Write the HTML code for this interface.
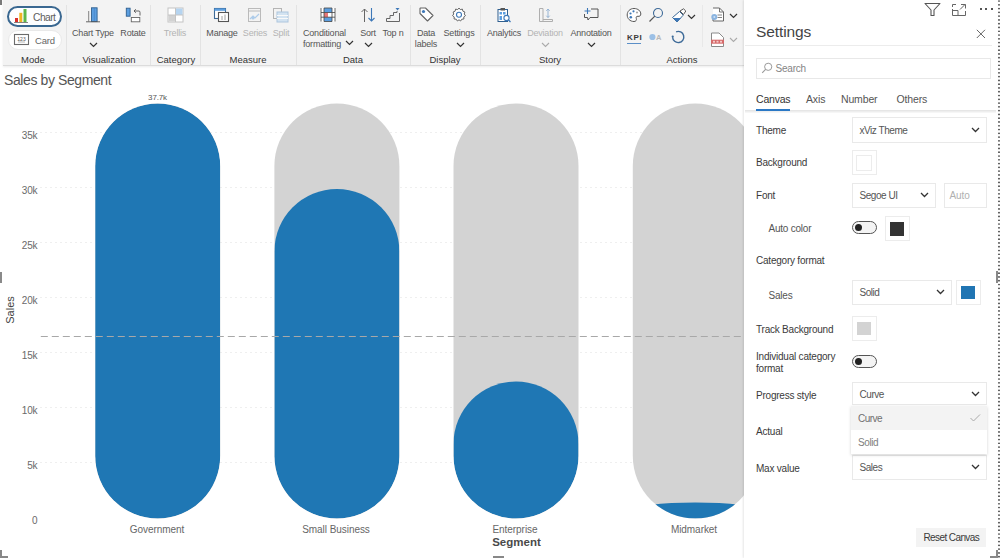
<!DOCTYPE html>
<html><head><meta charset="utf-8">
<style>
*{margin:0;padding:0;box-sizing:border-box}
html,body{width:1000px;height:558px;overflow:hidden;background:#fff;font-family:"Liberation Sans",sans-serif;position:relative}
.a{position:absolute;white-space:nowrap}
.rl{font-size:9px;color:#555;letter-spacing:-0.2px;text-align:center}
.rd{color:#b4b4b4}
.gl{font-size:9.5px;color:#333;letter-spacing:0px;text-align:center;line-height:11px}
.sep{position:absolute;top:5px;width:1px;height:60px;background:#e3e3e3}
.lbl{font-size:10px;color:#3a3a3a;letter-spacing:-0.22px}
.sel{position:absolute;border:1px solid #e9e9e9;background:#fff;font-size:10px;color:#555;letter-spacing:-0.45px}
.sel span{position:absolute;left:7px;top:50%;transform:translateY(-50%)}
.chev{position:absolute;right:6px;top:50%;margin-top:-3px}
.sw{position:absolute;border:1px solid #ececec;background:#fff}
.sw i{position:absolute;left:5px;top:5px;right:5px;bottom:5px}
.tg{position:absolute;width:25px;height:13px;border:1px solid #555;border-radius:7px;background:#f4f4f4}
.tg i{position:absolute;left:2px;top:2px;width:7px;height:7px;border-radius:50%;background:#222}
.yl{font-size:10px;color:#6a6a6a;text-align:right;width:30px;letter-spacing:-0.2px}
.xl{font-size:10px;color:#666;text-align:center;width:120px;letter-spacing:-0.05px}
</style></head><body>

<!-- corner marks -->
<div class="a" style="left:0;top:0;width:2px;height:5px;background:#7a7a7a"></div>
<div class="a" style="left:0;top:272px;width:2px;height:11px;background:#8a8a8a"></div>
<div class="a" style="left:0;top:550px;width:8px;height:8px;border-left:2px solid #888;border-bottom:2px solid #888"></div>
<div class="a" style="left:493px;top:556px;width:11px;height:2px;background:#888"></div>

<!-- RIBBON -->
<div class="a" style="left:3px;top:0;width:741px;height:66px;background:#f3f3f3;border-bottom:1px solid #dcdcdc;box-shadow:0 1px 2px rgba(0,0,0,0.08)"></div>


<!-- Mode -->
<div class="a" style="left:7px;top:5.5px;width:54.5px;height:21px;border:2px solid #3a6891;border-radius:11px;background:#fdfeff"></div>
<svg class="a" style="left:13px;top:8px" width="17" height="16" viewBox="0 0 17 16">
 <rect x="2" y="10" width="3" height="4.3" fill="#d9302c"/>
 <rect x="6.3" y="4.8" width="3" height="9.5" fill="#f0b323"/>
 <rect x="10.5" y="1" width="3" height="13.3" fill="#5cb84a"/>
 <rect x="1" y="14" width="14" height="0.9" fill="#777"/>
</svg>
<div class="a rl" style="left:33px;top:11.5px;font-size:10.3px;color:#606060;text-align:left;letter-spacing:-0.55px;line-height:11px">Chart</div>
<div class="a" style="left:7.5px;top:30px;width:54px;height:20px;border:1px solid #e9e9e9;border-radius:10px;background:#fff"></div>
<svg class="a" style="left:13px;top:33px" width="17" height="13" viewBox="0 0 17 13">
 <rect x="1.5" y="1.5" width="14" height="10" fill="none" stroke="#6b6b6b" stroke-width="1.1"/>
 <text x="8.5" y="7.6" font-size="5" font-family="Liberation Sans" text-anchor="middle" fill="#555">123</text>
 <line x1="5" y1="9" x2="12" y2="9" stroke="#888" stroke-width="0.6"/>
</svg>
<div class="a rl" style="left:35px;top:35px;font-size:9.5px;color:#666;text-align:left;letter-spacing:-0.2px">Card</div>
<div class="a gl" style="left:3px;top:53.8px;width:60px">Mode</div>
<div class="sep" style="left:66px"></div>

<!-- Visualization -->
<svg class="a" style="left:85px;top:6px" width="16" height="17" viewBox="0 0 16 17">
 <line x1="3.7" y1="5" x2="3.7" y2="15.5" stroke="#777" stroke-width="0.9"/>
 <rect x="6.5" y="1.8" width="5.6" height="13.8" fill="#5b9ee0" stroke="#2f5f8f" stroke-width="0.9"/>
 <line x1="9.3" y1="2" x2="9.3" y2="15.5" stroke="#3d78b8" stroke-width="0.5"/>
 <line x1="1" y1="15.8" x2="15" y2="15.8" stroke="#555" stroke-width="0.9"/>
</svg>
<div class="a rl" style="left:63px;top:28px;width:60px">Chart Type</div>
<svg class="a chv" style="left:89px;top:42px" width="9" height="6" viewBox="0 0 9 6"><path d="M1 1 L4.5 4.5 L8 1" fill="none" stroke="#333" stroke-width="1.2"/></svg>
<svg class="a" style="left:125px;top:7px" width="16" height="16" viewBox="0 0 16 16">
 <rect x="1.3" y="1.2" width="3.8" height="8" fill="#5b9ee0" stroke="#2f5f8f" stroke-width="0.9"/>
 <path d="M9 4 L14 4 Q15 4 15 5.5 L15 8.5 M9 4 L10.8 2.2 M9 4 L10.8 5.8" fill="none" stroke="#555" stroke-width="0.9"/>
 <rect x="6.3" y="10.5" width="8.5" height="4.3" fill="#fff" stroke="#666" stroke-width="0.9"/>
</svg>
<div class="a rl" style="left:113px;top:28px;width:40px">Rotate</div>
<div class="a gl" style="left:74px;top:53.8px;width:70px">Visualization</div>
<div class="sep" style="left:150px"></div>

<!-- Category -->
<svg class="a" style="left:167px;top:7px" width="17" height="16" viewBox="0 0 17 16">
 <rect x="1" y="1" width="15" height="14" fill="#fff" stroke="#c4c4c4" stroke-width="1"/>
 <rect x="8.5" y="1.5" width="7" height="6.5" fill="#b5d4f0"/>
 <rect x="1.5" y="8" width="7" height="6.5" fill="#d2d2d2"/>
 <line x1="8.5" y1="1" x2="8.5" y2="15" stroke="#c4c4c4"/>
 <line x1="1" y1="8" x2="16" y2="8" stroke="#c4c4c4"/>
</svg>
<div class="a rl rd" style="left:155px;top:28px;width:40px">Trellis</div>
<div class="a gl" style="left:151px;top:53.8px;width:50px">Category</div>
<div class="sep" style="left:200px"></div>

<!-- Measure -->
<svg class="a" style="left:213px;top:7px" width="17" height="16" viewBox="0 0 17 16">
 <rect x="1.5" y="1.5" width="11" height="10" fill="#fff" stroke="#3d6a98" stroke-width="1.1"/>
 <rect x="1.5" y="1.5" width="11" height="2.3" fill="#5b9ee0"/>
 <rect x="5.5" y="5.5" width="10" height="9" fill="#fff" stroke="#555" stroke-width="1.1"/>
 <line x1="9" y1="9" x2="9" y2="13" stroke="#888" stroke-width="0.8"/>
 <line x1="12" y1="7.5" x2="12" y2="13" stroke="#888" stroke-width="0.8"/>
</svg>
<div class="a rl" style="left:202px;top:28px;width:40px">Manage</div>
<svg class="a" style="left:247px;top:7px" width="16" height="16" viewBox="0 0 16 16" opacity="0.45">
 <rect x="1.5" y="1.5" width="12" height="13" fill="none" stroke="#777" stroke-width="1"/>
 <line x1="1.5" y1="4" x2="13.5" y2="4" stroke="#777"/>
 <path d="M3 12 L6 9 L8 11 L12 7" fill="none" stroke="#5b9ee0" stroke-width="1.2"/>
 <circle cx="6" cy="11" r="1.5" fill="#5b9ee0"/>
</svg>
<div class="a rl rd" style="left:235px;top:28px;width:40px">Series</div>
<svg class="a" style="left:272px;top:7px" width="17" height="16" viewBox="0 0 17 16" opacity="0.5">
 <rect x="1.5" y="1.5" width="8" height="10" fill="none" stroke="#777" stroke-width="1"/>
 <rect x="5" y="5" width="11" height="10" fill="#b5d4f0" stroke="#6a9ccc" stroke-width="1"/>
 <line x1="5" y1="8.5" x2="16" y2="8.5" stroke="#fff"/>
 <line x1="5" y1="11.5" x2="16" y2="11.5" stroke="#fff"/>
</svg>
<div class="a rl rd" style="left:261px;top:28px;width:40px">Split</div>
<div class="a gl" style="left:218px;top:53.8px;width:60px">Measure</div>
<div class="sep" style="left:296px"></div>

<!-- Data -->
<svg class="a" style="left:319px;top:6px" width="17" height="17" viewBox="0 0 17 17">
 <rect x="2" y="2" width="14" height="13.5" fill="#fff"/>
 <rect x="5" y="2" width="8" height="4.5" fill="#5b9ee0"/>
 <rect x="5" y="11.2" width="8" height="4.3" fill="#5b9ee0"/>
 <rect x="5" y="6.5" width="4" height="4.7" fill="#e87878"/>
 <path d="M2 2 L2 15.5 M16 2 L16 15.5 M5 2 L5 15.5 M13 2 L13 15.5 M2 6.5 L16 6.5 M2 11.2 L16 11.2 M5 2 L13 2 M5 15.5 L13 15.5" stroke="#444" stroke-width="0.8"/>
</svg>
<div class="a rl" style="left:303px;top:28px;text-align:left">Conditional</div>
<div class="a rl" style="left:303px;top:39px;text-align:left">formatting</div>
<svg class="a" style="left:345px;top:40px" width="9" height="6" viewBox="0 0 9 6"><path d="M1 1 L4.5 4.5 L8 1" fill="none" stroke="#333" stroke-width="1.2"/></svg>
<svg class="a" style="left:360px;top:7px" width="16" height="16" viewBox="0 0 16 16">
 <path d="M4.5 15 L4.5 2 M1.5 5 L4.5 2 L7.5 5" fill="none" stroke="#666" stroke-width="1"/>
 <path d="M11.5 1 L11.5 14 M8.5 11 L11.5 14 L14.5 11" fill="none" stroke="#3d78b8" stroke-width="1.1"/>
</svg>
<div class="a rl" style="left:348px;top:28px;width:40px">Sort</div>
<svg class="a" style="left:364px;top:42px" width="9" height="6" viewBox="0 0 9 6"><path d="M1 1 L4.5 4.5 L8 1" fill="none" stroke="#333" stroke-width="1.2"/></svg>
<svg class="a" style="left:385px;top:7px" width="16" height="16" viewBox="0 0 16 16">
 <path d="M1.5 14.5 L1.5 11.5 L5 11.5 L5 8.5 L8.5 8.5 L8.5 5.5 L12 5.5 L12 4 M1.5 14.5 L14.5 14.5 L14.5 6" fill="none" stroke="#666" stroke-width="1"/>
 <path d="M10.5 1 L14.5 1 L12.5 3.5 Z" fill="#3d78b8"/>
</svg>
<div class="a rl" style="left:373px;top:28px;width:40px">Top n</div>
<div class="a gl" style="left:328px;top:53.8px;width:50px">Data</div>
<div class="sep" style="left:410px"></div>

<!-- Display -->
<svg class="a" style="left:418px;top:6px" width="17" height="17" viewBox="0 0 17 17">
 <path d="M2 2.5 L2 7.5 L9.5 15 L15 9.5 L7.5 2 L2.5 2 Z" fill="#fff" stroke="#666" stroke-width="1.1" stroke-linejoin="round"/>
 <circle cx="5.5" cy="5.5" r="1.6" fill="#3d78b8"/>
</svg>
<div class="a rl" style="left:406px;top:28px;width:40px">Data</div>
<div class="a rl" style="left:406px;top:39px;width:40px">labels</div>
<svg class="a" style="left:451px;top:7px" width="16" height="16" viewBox="0 0 16 16">
 <path d="M8 1 L9.3 2.6 L11.4 2.1 L11.9 4.2 L13.9 5 L13.2 7 L14.5 8.6 L12.8 9.9 L12.9 12 L10.8 12.2 L9.6 14 L8 12.8 L6.4 14 L5.2 12.2 L3.1 12 L3.2 9.9 L1.5 8.6 L2.8 7 L2.1 5 L4.1 4.2 L4.6 2.1 L6.7 2.6 Z" fill="#fff" stroke="#666" stroke-width="1" stroke-linejoin="round"/>
 <circle cx="8" cy="7.8" r="2.5" fill="none" stroke="#3d78b8" stroke-width="1.1"/>
</svg>
<div class="a rl" style="left:439px;top:28px;width:40px">Settings</div>
<svg class="a" style="left:456px;top:42px" width="9" height="6" viewBox="0 0 9 6"><path d="M1 1 L4.5 4.5 L8 1" fill="none" stroke="#333" stroke-width="1.2"/></svg>
<div class="a gl" style="left:420px;top:53.8px;width:50px">Display</div>
<div class="sep" style="left:480px"></div>

<!-- Story -->
<svg class="a" style="left:496px;top:7px" width="16" height="16" viewBox="0 0 16 16">
 <rect x="2" y="2.5" width="9.5" height="12" fill="#fff" stroke="#2f5f8f" stroke-width="1"/>
 <rect x="4.5" y="1" width="4.5" height="2.5" fill="#555"/>
 <rect x="3.5" y="5" width="2.5" height="2.5" fill="#5b9ee0"/>
 <rect x="7" y="5" width="2.5" height="2.5" fill="#5b9ee0"/>
 <rect x="3.5" y="9" width="2.5" height="4" fill="#5b9ee0"/>
 <circle cx="10.5" cy="11" r="2.6" fill="#fff" stroke="#3d78b8" stroke-width="1.1"/>
 <line x1="12.3" y1="12.8" x2="14.5" y2="15" stroke="#3d78b8" stroke-width="1.3"/>
</svg>
<div class="a rl" style="left:484px;top:28px;width:40px">Analytics</div>
<svg class="a" style="left:538px;top:7px" width="16" height="16" viewBox="0 0 16 16" opacity="0.55">
 <path d="M1.5 1.5 L5 1.5 L5 14.5 L1.5 14.5 Z" fill="none" stroke="#777" stroke-width="1"/>
 <path d="M5 14.5 L14.5 14.5 L14.5 12.5 L5 12.5" fill="none" stroke="#777" stroke-width="1"/>
 <path d="M10 2 L10 10.5 M8.3 3.8 L10 2 L11.7 3.8 M8.3 8.7 L10 10.5 L11.7 8.7" fill="none" stroke="#3d78b8" stroke-width="0.9"/>
</svg>
<div class="a rl rd" style="left:525px;top:28px;width:40px">Deviation</div>
<svg class="a" style="left:541px;top:42px" width="9" height="6" viewBox="0 0 9 6"><path d="M1 1 L4.5 4.5 L8 1" fill="none" stroke="#aaa" stroke-width="1.1"/></svg>
<svg class="a" style="left:583px;top:7px" width="16" height="16" viewBox="0 0 16 16">
 <path d="M8 2 L15 2 L15 10.5 L7 10.5 L5 13 L4.5 10.5 L1.5 10.5 L1.5 7" fill="none" stroke="#555" stroke-width="1"/>
 <path d="M4.5 1 L4.5 7 M1.5 4 L7.5 4" fill="none" stroke="#3d78b8" stroke-width="1.1"/>
</svg>
<div class="a rl" style="left:570px;top:28px;width:42px">Annotation</div>
<svg class="a" style="left:587px;top:42px" width="9" height="6" viewBox="0 0 9 6"><path d="M1 1 L4.5 4.5 L8 1" fill="none" stroke="#333" stroke-width="1.2"/></svg>
<div class="a gl" style="left:525px;top:53.8px;width:50px">Story</div>
<div class="sep" style="left:620px"></div>

<!-- Actions -->
<svg class="a" style="left:626px;top:7px" width="16" height="16" viewBox="0 0 16 16">
 <path d="M8 1.5 C12 1.5 14.8 4 14.8 7 C14.8 9 13.5 9.5 12 9.3 C10.5 9.1 9.8 10 10.3 11.5 C10.8 13 10 14.5 8 14.5 C4 14.5 1.2 11.5 1.2 8 C1.2 4.3 4 1.5 8 1.5 Z" fill="#fff" stroke="#555" stroke-width="1"/>
 <circle cx="4.5" cy="6.5" r="1.1" fill="#3d78b8"/>
 <circle cx="7.5" cy="4.3" r="1.1" fill="#3d78b8"/>
 <circle cx="11" cy="5.5" r="1.1" fill="#aaa"/>
 <circle cx="4.8" cy="10.3" r="1.3" fill="#3d78b8"/>
</svg>
<svg class="a" style="left:648px;top:7px" width="16" height="16" viewBox="0 0 16 16">
 <circle cx="10" cy="6" r="4.5" fill="none" stroke="#3d6a98" stroke-width="1.1"/>
 <line x1="6.8" y1="9.2" x2="1.5" y2="14.5" stroke="#555" stroke-width="1.2"/>
</svg>
<svg class="a" style="left:671px;top:8px" width="16" height="16" viewBox="0 0 16 16">
 <path d="M9 3 L12.5 0.8 L14.8 3 L12.5 6.5 Z" fill="#fff" stroke="#555" stroke-width="1"/>
 <path d="M8.5 3.5 L12.2 7.2 L6 14 L1.5 9.5 Z" fill="#fff" stroke="#3d6a98" stroke-width="1"/>
 <path d="M2 10 L10 10 L6 14 Z" fill="#3d78b8"/>
</svg>
<svg class="a" style="left:687px;top:13.5px" width="9" height="6" viewBox="0 0 9 6"><path d="M1 1 L4.5 4.5 L8 1" fill="none" stroke="#333" stroke-width="1.2"/></svg>
<div class="a" style="left:627px;top:32.6px;font-size:8px;font-weight:bold;color:#3a3a3a;letter-spacing:0.7px;line-height:9px">KPI</div>
<div class="a" style="left:627px;top:43px;width:14px;height:1.3px;background:#5b8fc7"></div>
<svg class="a" style="left:649px;top:32px" width="16" height="10" viewBox="0 0 16 10">
 <circle cx="3.4" cy="5" r="3.1" fill="#9cc0e6"/>
 <text x="9.8" y="8" font-size="7.5" font-weight="bold" font-family="Liberation Sans" text-anchor="middle" fill="#b8b8b8">A</text>
</svg>
<svg class="a" style="left:671px;top:30px" width="15" height="15" viewBox="0 0 15 15">
 <path d="M5.1 1.8 A5.6 5.6 0 1 1 1.6 7.2" fill="none" stroke="#3d6a98" stroke-width="1.4"/>
 <circle cx="1.7" cy="6.6" r="1.1" fill="#3d6a98"/>
</svg>
<div class="a gl" style="left:657px;top:53.8px;width:50px">Actions</div>
<div class="a" style="left:702px;top:5px;width:1px;height:42px;background:#e8e8e8"></div>
<svg class="a" style="left:709px;top:6px" width="17" height="17" viewBox="0 0 17 17">
 <path d="M4 2 L10.5 2 L14.5 6 L14.5 15 L4 15 L4 12" fill="#fff" stroke="#666" stroke-width="1"/>
 <path d="M10.5 2 L10.5 6 L14.5 6" fill="none" stroke="#666" stroke-width="0.9"/>
 <line x1="8.5" y1="9" x2="13" y2="9" stroke="#777" stroke-width="0.9"/>
 <line x1="8.5" y1="11.5" x2="13" y2="11.5" stroke="#777" stroke-width="0.9"/>
 <circle cx="5.3" cy="11" r="3" fill="#8ab4e0"/>
 <circle cx="5.3" cy="11" r="1" fill="#cfe0f2"/>
</svg>
<svg class="a" style="left:728.5px;top:12.5px" width="9" height="6" viewBox="0 0 9 6"><path d="M1 1 L4.5 4.5 L8 1" fill="none" stroke="#333" stroke-width="1.2"/></svg>
<svg class="a" style="left:709px;top:31px" width="17" height="17" viewBox="0 0 17 17">
 <path d="M2.5 2 L10 2 L14.5 6.5 L14.5 15.5 L2.5 15.5 Z" fill="#fff" stroke="#8a8a8a" stroke-width="1"/>
 <rect x="2" y="8.7" width="13" height="4" fill="#d66b6b"/>
 <rect x="4" y="9.8" width="2" height="1.8" fill="#f4caca"/>
 <rect x="7.5" y="9.8" width="2" height="1.8" fill="#f4caca"/>
 <rect x="11" y="9.8" width="2" height="1.8" fill="#f4caca"/>
</svg>
<svg class="a" style="left:729px;top:36.5px" width="9" height="6" viewBox="0 0 9 6"><path d="M1 1 L4.5 4.5 L8 1" fill="none" stroke="#aaa" stroke-width="1.1"/></svg>


<!-- CHART -->
<div class="a" style="left:4px;top:72.2px;font-size:14px;color:#555;letter-spacing:-0.4px">Sales by Segment</div>

<svg class="a" style="left:0;top:0" width="1000" height="558">
<g stroke="#efefef" stroke-width="1" stroke-dasharray="2,3">
<line x1="40" y1="132.5" x2="744" y2="132.5"/>
<line x1="40" y1="187.5" x2="744" y2="187.5"/>
<line x1="40" y1="242.5" x2="744" y2="242.5"/>
<line x1="40" y1="297.5" x2="744" y2="297.5"/>
<line x1="40" y1="352.5" x2="744" y2="352.5"/>
<line x1="40" y1="407.5" x2="744" y2="407.5"/>
<line x1="40" y1="462.5" x2="744" y2="462.5"/>
</g><defs>
<clipPath id="c0"><rect x="95.2" y="103.5" width="125" height="415.0" rx="62.5" ry="62.5"/></clipPath>
<clipPath id="c1"><rect x="274.4" y="103.5" width="125" height="415.0" rx="62.5" ry="62.5"/></clipPath>
<clipPath id="c2"><rect x="453.5" y="103.5" width="125" height="415.0" rx="62.5" ry="62.5"/></clipPath>
<clipPath id="c3"><rect x="632.8" y="103.5" width="125" height="415.0" rx="62.5" ry="62.5"/></clipPath>
</defs>
<rect x="95.2" y="103.5" width="125" height="415.0" rx="62.5" fill="#d3d3d3"/>
<rect x="274.4" y="103.5" width="125" height="415.0" rx="62.5" fill="#d3d3d3"/>
<rect x="453.5" y="103.5" width="125" height="415.0" rx="62.5" fill="#d3d3d3"/>
<rect x="632.8" y="103.5" width="125" height="415.0" rx="62.5" fill="#d3d3d3"/>
<rect x="95.2" y="103.5" width="125" height="415.0" rx="62.5" ry="62.5" fill="#1f77b4" clip-path="url(#c0)"/>
<rect x="274.4" y="188.9" width="125" height="329.6" rx="62.5" ry="62.5" fill="#1f77b4" clip-path="url(#c1)"/>
<rect x="453.5" y="381.5" width="125" height="137.0" rx="62.5" ry="62.5" fill="#1f77b4" clip-path="url(#c2)"/>
<rect x="632.8" y="502.5" width="125" height="16.0" rx="62.5" ry="8.0" fill="#1f77b4" clip-path="url(#c3)"/>
<line x1="40.8" y1="336.5" x2="744" y2="336.5" stroke="#a8a8a8" stroke-width="1" stroke-dasharray="7,4"/>
</svg>

<div class="a" style="left:139.5px;top:93px;font-size:8px;color:#555;width:36px;text-align:center;letter-spacing:-0.15px">37.7k</div>

<div class="a yl" style="left:7.3px;top:129.5px">35k</div>
<div class="a yl" style="left:7.3px;top:184.5px">30k</div>
<div class="a yl" style="left:7.3px;top:239.5px">25k</div>
<div class="a yl" style="left:7.3px;top:294.5px">20k</div>
<div class="a yl" style="left:7.3px;top:349.5px">15k</div>
<div class="a yl" style="left:7.3px;top:404.5px">10k</div>
<div class="a yl" style="left:7.3px;top:459.5px">5k</div>
<div class="a yl" style="left:7.3px;top:514.5px">0</div>
<div class="a" style="left:-6px;top:304px;font-size:11px;color:#444;transform:rotate(-90deg);width:32px;text-align:center">Sales</div>

<div class="a xl" style="left:97px;top:523.5px">Government</div>
<div class="a xl" style="left:276px;top:523.5px">Small Business</div>
<div class="a xl" style="left:455px;top:523.5px">Enterprise</div>
<div class="a xl" style="left:634px;top:523.5px">Midmarket</div>
<div class="a" style="left:456.5px;top:535.5px;width:120px;text-align:center;font-size:11.5px;color:#4a4a4a;font-weight:bold;letter-spacing:0px">Segment</div>

<!-- SETTINGS PANEL -->
<div class="a" style="left:744px;top:0;width:253px;height:558px;background:#fff;box-shadow:-1px 0 2px rgba(0,0,0,0.10)"></div>

<!-- header icons -->
<svg class="a" style="left:924px;top:2px" width="17" height="15" viewBox="0 0 17 15">
 <path d="M1 1.5 L16 1.5 L10 8 L10 13.5 L7 13.5 L7 8 Z" fill="none" stroke="#555" stroke-width="1.1" stroke-linejoin="round"/>
</svg>
<svg class="a" style="left:951px;top:3px" width="16" height="14" viewBox="0 0 16 14">
 <path d="M1.5 6 L1.5 12.5 L14.5 12.5 L14.5 8 M1.5 4 L1.5 1.5 L5 1.5 M1.5 7.5 L7 7.5 L7 12.5" fill="none" stroke="#666" stroke-width="1"/>
 <path d="M9 6.5 L14 1.5 M10 1.5 L14.5 1.5 L14.5 5.5" fill="none" stroke="#666" stroke-width="1"/>
</svg>
<div class="a" style="left:979.5px;top:8px;width:2px;height:2px;background:#555"></div>
<div class="a" style="left:985px;top:8px;width:2px;height:2px;background:#555"></div>
<div class="a" style="left:990.5px;top:8px;width:2px;height:2px;background:#555"></div>

<div class="a" style="left:756px;top:22.8px;font-size:15.5px;color:#444;letter-spacing:-0.1px;line-height:18px">Settings</div>
<svg class="a" style="left:975.5px;top:29px" width="10" height="10" viewBox="0 0 10 10"><path d="M0.8 0.8 L9 9 M9 0.8 L0.8 9" stroke="#666" stroke-width="1"/></svg>
<div class="a" style="left:745px;top:45px;width:247px;height:1px;background:#ececec"></div>

<div class="a" style="left:756px;top:57.5px;width:234.5px;height:21px;border:1px solid #e8e8e8;background:#fff"></div>
<svg class="a" style="left:761px;top:62px" width="12" height="12" viewBox="0 0 12 12">
 <circle cx="7.2" cy="4.8" r="3.6" fill="none" stroke="#9a9a9a" stroke-width="1"/>
 <line x1="4.6" y1="7.4" x2="1.2" y2="10.8" stroke="#9a9a9a" stroke-width="1.1"/>
</svg>
<div class="a" style="left:775.5px;top:63px;font-size:10px;color:#858585;letter-spacing:-0.2px;line-height:11px">Search</div>

<div class="a" style="left:756px;top:92.5px;font-size:10.5px;color:#333;letter-spacing:-0.2px;line-height:12px">Canvas</div>
<div class="a" style="left:806px;top:92.5px;font-size:10.5px;color:#555;letter-spacing:-0.15px;line-height:12px">Axis</div>
<div class="a" style="left:841px;top:92.5px;font-size:10.5px;color:#555;letter-spacing:-0.15px;line-height:12px">Number</div>
<div class="a" style="left:896.5px;top:92.5px;font-size:10.5px;color:#555;letter-spacing:-0.15px;line-height:12px">Others</div>
<div class="a" style="left:745px;top:110px;width:251px;height:3px;background:linear-gradient(#e2e2e2,#fafafa)"></div>
<div class="a" style="left:756px;top:108.5px;width:34px;height:2px;background:#2b78c5"></div>

<!-- rows -->
<div class="a lbl" style="left:756px;top:124.5px;line-height:11px">Theme</div>
<div class="sel" style="left:851.5px;top:117px;width:135px;height:25.5px"><span>xViz Theme</span><svg class="chev" width="9" height="6" viewBox="0 0 9 6"><path d="M1 1 L4.5 4.5 L8 1" fill="none" stroke="#333" stroke-width="1.3"/></svg></div>

<div class="a lbl" style="left:756px;top:157px;line-height:11px">Background</div>
<div class="sw" style="left:851.5px;top:150px;width:25px;height:25px"><i style="border:1px solid #ececec;background:#fff;left:3.5px;top:3.5px;right:3.5px;bottom:3.5px"></i></div>

<div class="a lbl" style="left:756px;top:190px;line-height:11px">Font</div>
<div class="sel" style="left:851.5px;top:183px;width:84px;height:24.5px"><span>Segoe UI</span><svg class="chev" width="9" height="6" viewBox="0 0 9 6"><path d="M1 1 L4.5 4.5 L8 1" fill="none" stroke="#333" stroke-width="1.3"/></svg></div>
<div class="sel" style="left:944px;top:183px;width:42.5px;height:24.5px;color:#b0b0b0"><span style="left:4.5px;letter-spacing:-0.1px">Auto</span></div>

<div class="a lbl" style="left:768.5px;top:223px;line-height:11px;color:#555">Auto color</div>
<div class="tg" style="left:852px;top:221px"><i></i></div>
<div class="sw" style="left:884.5px;top:216px;width:25px;height:25px"><i style="background:#333;left:4.5px;top:4.5px;right:4.5px;bottom:4.5px"></i></div>

<div class="a lbl" style="left:756px;top:255px;line-height:11px">Category format</div>

<div class="a lbl" style="left:768.5px;top:289.5px;line-height:11px;color:#555">Sales</div>
<div class="sel" style="left:851.5px;top:280px;width:100px;height:24.5px"><span>Solid</span><svg class="chev" width="9" height="6" viewBox="0 0 9 6"><path d="M1 1 L4.5 4.5 L8 1" fill="none" stroke="#333" stroke-width="1.3"/></svg></div>
<div class="sw" style="left:955.5px;top:280px;width:25px;height:24.5px"><i style="background:#2075b3;left:4.5px;top:4.5px;right:4.5px;bottom:4.5px"></i></div>

<div class="a lbl" style="left:756px;top:324px;line-height:11px">Track Background</div>
<div class="sw" style="left:851.5px;top:316px;width:25px;height:24.5px"><i style="background:#d3d3d3;left:4.5px;top:4.5px;right:4.5px;bottom:4.5px"></i></div>

<div class="a lbl" style="left:756px;top:350.5px;line-height:12.5px">Individual category<br>format</div>
<div class="tg" style="left:852px;top:355px"><i></i></div>

<div class="a lbl" style="left:756px;top:389.5px;line-height:11px">Progress style</div>
<div class="sel" style="left:851.5px;top:382px;width:135px;height:23px"><span>Curve</span><svg class="chev" width="9" height="6" viewBox="0 0 9 6"><path d="M1 1 L4.5 4.5 L8 1" fill="none" stroke="#333" stroke-width="1.3"/></svg></div>

<div class="a lbl" style="left:756px;top:425.5px;line-height:11px">Actual</div>

<div class="a lbl" style="left:756px;top:463px;line-height:11px">Max value</div>
<div class="sel" style="left:851.5px;top:455px;width:135px;height:24.5px"><span>Sales</span><svg class="chev" width="9" height="6" viewBox="0 0 9 6"><path d="M1 1 L4.5 4.5 L8 1" fill="none" stroke="#333" stroke-width="1.3"/></svg></div>

<!-- dropdown -->
<div class="a" style="left:851px;top:406px;width:135.5px;height:47.5px;background:#fff;box-shadow:0 1px 3px rgba(0,0,0,0.18)"></div>
<div class="a" style="left:851px;top:406px;width:135.5px;height:23.5px;background:#f3f3f3"></div>
<div class="a" style="left:858px;top:412.5px;font-size:10px;color:#707070;letter-spacing:-0.5px;line-height:11px">Curve</div>
<svg class="a" style="left:969px;top:413px" width="12" height="10" viewBox="0 0 12 10"><path d="M1.5 5 L4.5 8 L11 1.5" fill="none" stroke="#aaa" stroke-width="1"/></svg>
<div class="a" style="left:858px;top:436.5px;font-size:10px;color:#808080;letter-spacing:-0.4px;line-height:11px">Solid</div>

<!-- reset -->
<div class="a" style="left:916px;top:527.5px;width:70px;height:19px;background:#f3f3f3"></div>
<div class="a" style="left:923.5px;top:532px;font-size:10px;color:#3a3a3a;letter-spacing:-0.6px;line-height:11px">Reset Canvas</div>

<!-- dotted border & handles -->
<svg class="a" style="left:997.5px;top:0" width="2" height="558" fill="#333"><circle cx="1" cy="1.00" r="0.85"/><circle cx="1" cy="4.78" r="0.85"/><circle cx="1" cy="8.56" r="0.85"/><circle cx="1" cy="12.34" r="0.85"/><circle cx="1" cy="16.12" r="0.85"/><circle cx="1" cy="19.90" r="0.85"/><circle cx="1" cy="23.68" r="0.85"/><circle cx="1" cy="27.46" r="0.85"/><circle cx="1" cy="31.24" r="0.85"/><circle cx="1" cy="35.02" r="0.85"/><circle cx="1" cy="38.80" r="0.85"/><circle cx="1" cy="42.58" r="0.85"/><circle cx="1" cy="46.36" r="0.85"/><circle cx="1" cy="50.14" r="0.85"/><circle cx="1" cy="53.92" r="0.85"/><circle cx="1" cy="57.70" r="0.85"/><circle cx="1" cy="61.48" r="0.85"/><circle cx="1" cy="65.26" r="0.85"/><circle cx="1" cy="69.04" r="0.85"/><circle cx="1" cy="72.82" r="0.85"/><circle cx="1" cy="76.60" r="0.85"/><circle cx="1" cy="80.38" r="0.85"/><circle cx="1" cy="84.16" r="0.85"/><circle cx="1" cy="87.94" r="0.85"/><circle cx="1" cy="91.72" r="0.85"/><circle cx="1" cy="95.50" r="0.85"/><circle cx="1" cy="99.28" r="0.85"/><circle cx="1" cy="103.06" r="0.85"/><circle cx="1" cy="106.84" r="0.85"/><circle cx="1" cy="110.62" r="0.85"/><circle cx="1" cy="114.40" r="0.85"/><circle cx="1" cy="118.18" r="0.85"/><circle cx="1" cy="121.96" r="0.85"/><circle cx="1" cy="125.74" r="0.85"/><circle cx="1" cy="129.52" r="0.85"/><circle cx="1" cy="133.30" r="0.85"/><circle cx="1" cy="137.08" r="0.85"/><circle cx="1" cy="140.86" r="0.85"/><circle cx="1" cy="144.64" r="0.85"/><circle cx="1" cy="148.42" r="0.85"/><circle cx="1" cy="152.20" r="0.85"/><circle cx="1" cy="155.98" r="0.85"/><circle cx="1" cy="159.76" r="0.85"/><circle cx="1" cy="163.54" r="0.85"/><circle cx="1" cy="167.32" r="0.85"/><circle cx="1" cy="171.10" r="0.85"/><circle cx="1" cy="174.88" r="0.85"/><circle cx="1" cy="178.66" r="0.85"/><circle cx="1" cy="182.44" r="0.85"/><circle cx="1" cy="186.22" r="0.85"/><circle cx="1" cy="190.00" r="0.85"/><circle cx="1" cy="193.78" r="0.85"/><circle cx="1" cy="197.56" r="0.85"/><circle cx="1" cy="201.34" r="0.85"/><circle cx="1" cy="205.12" r="0.85"/><circle cx="1" cy="208.90" r="0.85"/><circle cx="1" cy="212.68" r="0.85"/><circle cx="1" cy="216.46" r="0.85"/><circle cx="1" cy="220.24" r="0.85"/><circle cx="1" cy="224.02" r="0.85"/><circle cx="1" cy="227.80" r="0.85"/><circle cx="1" cy="231.58" r="0.85"/><circle cx="1" cy="235.36" r="0.85"/><circle cx="1" cy="239.14" r="0.85"/><circle cx="1" cy="242.92" r="0.85"/><circle cx="1" cy="246.70" r="0.85"/><circle cx="1" cy="250.48" r="0.85"/><circle cx="1" cy="254.26" r="0.85"/><circle cx="1" cy="258.04" r="0.85"/><circle cx="1" cy="261.82" r="0.85"/><circle cx="1" cy="265.60" r="0.85"/><circle cx="1" cy="269.38" r="0.85"/><circle cx="1" cy="273.16" r="0.85"/><circle cx="1" cy="276.94" r="0.85"/><circle cx="1" cy="280.72" r="0.85"/><circle cx="1" cy="284.50" r="0.85"/><circle cx="1" cy="288.28" r="0.85"/><circle cx="1" cy="292.06" r="0.85"/><circle cx="1" cy="295.84" r="0.85"/><circle cx="1" cy="299.62" r="0.85"/><circle cx="1" cy="303.40" r="0.85"/><circle cx="1" cy="307.18" r="0.85"/><circle cx="1" cy="310.96" r="0.85"/><circle cx="1" cy="314.74" r="0.85"/><circle cx="1" cy="318.52" r="0.85"/><circle cx="1" cy="322.30" r="0.85"/><circle cx="1" cy="326.08" r="0.85"/><circle cx="1" cy="329.86" r="0.85"/><circle cx="1" cy="333.64" r="0.85"/><circle cx="1" cy="337.42" r="0.85"/><circle cx="1" cy="341.20" r="0.85"/><circle cx="1" cy="344.98" r="0.85"/><circle cx="1" cy="348.76" r="0.85"/><circle cx="1" cy="352.54" r="0.85"/><circle cx="1" cy="356.32" r="0.85"/><circle cx="1" cy="360.10" r="0.85"/><circle cx="1" cy="363.88" r="0.85"/><circle cx="1" cy="367.66" r="0.85"/><circle cx="1" cy="371.44" r="0.85"/><circle cx="1" cy="375.22" r="0.85"/><circle cx="1" cy="379.00" r="0.85"/><circle cx="1" cy="382.78" r="0.85"/><circle cx="1" cy="386.56" r="0.85"/><circle cx="1" cy="390.34" r="0.85"/><circle cx="1" cy="394.12" r="0.85"/><circle cx="1" cy="397.90" r="0.85"/><circle cx="1" cy="401.68" r="0.85"/><circle cx="1" cy="405.46" r="0.85"/><circle cx="1" cy="409.24" r="0.85"/><circle cx="1" cy="413.02" r="0.85"/><circle cx="1" cy="416.80" r="0.85"/><circle cx="1" cy="420.58" r="0.85"/><circle cx="1" cy="424.36" r="0.85"/><circle cx="1" cy="428.14" r="0.85"/><circle cx="1" cy="431.92" r="0.85"/><circle cx="1" cy="435.70" r="0.85"/><circle cx="1" cy="439.48" r="0.85"/><circle cx="1" cy="443.26" r="0.85"/><circle cx="1" cy="447.04" r="0.85"/><circle cx="1" cy="450.82" r="0.85"/><circle cx="1" cy="454.60" r="0.85"/><circle cx="1" cy="458.38" r="0.85"/><circle cx="1" cy="462.16" r="0.85"/><circle cx="1" cy="465.94" r="0.85"/><circle cx="1" cy="469.72" r="0.85"/><circle cx="1" cy="473.50" r="0.85"/><circle cx="1" cy="477.28" r="0.85"/><circle cx="1" cy="481.06" r="0.85"/><circle cx="1" cy="484.84" r="0.85"/><circle cx="1" cy="488.62" r="0.85"/><circle cx="1" cy="492.40" r="0.85"/><circle cx="1" cy="496.18" r="0.85"/><circle cx="1" cy="499.96" r="0.85"/><circle cx="1" cy="503.74" r="0.85"/><circle cx="1" cy="507.52" r="0.85"/><circle cx="1" cy="511.30" r="0.85"/><circle cx="1" cy="515.08" r="0.85"/><circle cx="1" cy="518.86" r="0.85"/><circle cx="1" cy="522.64" r="0.85"/><circle cx="1" cy="526.42" r="0.85"/><circle cx="1" cy="530.20" r="0.85"/><circle cx="1" cy="533.98" r="0.85"/><circle cx="1" cy="537.76" r="0.85"/><circle cx="1" cy="541.54" r="0.85"/><circle cx="1" cy="545.32" r="0.85"/><circle cx="1" cy="549.10" r="0.85"/><circle cx="1" cy="552.88" r="0.85"/><circle cx="1" cy="556.66" r="0.85"/></svg>
<div class="a" style="left:996px;top:271px;width:2px;height:12px;background:#888"></div>
<div class="a" style="left:990px;top:550px;width:8px;height:8px;border-right:2px solid #888;border-bottom:2px solid #888"></div>


</body></html>
